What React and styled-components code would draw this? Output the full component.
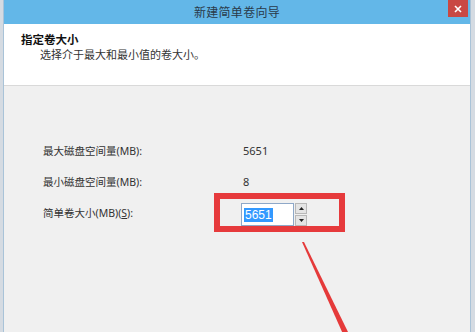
import React from 'react';
import styled, {createGlobalStyle} from 'styled-components';

const GlobalStyle = createGlobalStyle`
  html, body {
    margin: 0;
    padding: 0;
    width: 475px;
    height: 332px;
    overflow: hidden;
    background: #d5dbe2;
  }
  body {
    font-family: "Noto Sans", "Noto Sans CJK SC", sans-serif;
    color: #222;
  }
  * {
    box-sizing: border-box;
  }
`;

const rows = [
    {label: '最大磁盘空间量(MB):', value: '5651'},
    {label: '最小磁盘空间量(MB):', value: '8'},
];

const App = () => {
    return (
        <>
            <GlobalStyle/>
            <Desktop>
                <Window>
                    <TitleBar>
                        <span/>
                        <Title>新建简单卷向导</Title>
                        <CloseButton>
                            <svg width="8" height="8" viewBox="0 0 8 8">
                                <path d="M1 1 L7 7 M7 1 L1 7" stroke="#fff" strokeWidth="1.6"/>
                            </svg>
                        </CloseButton>
                    </TitleBar>

                    <Header>
                        <HeadTitle>指定卷大小</HeadTitle>
                        <HeadSub>选择介于最大和最小值的卷大小。</HeadSub>
                    </Header>

                    <Body>
                        <Fields>
                            {rows.map((row) => (
                                <React.Fragment key={row.label}>
                                    <Label>{row.label}</Label>
                                    <Value>{row.value}</Value>
                                </React.Fragment>
                            ))}
                            <Label $last>简单卷大小(MB)(<u>S</u>):</Label>
                            <SpinBox>
                                <Input>
                                    <Selected>5651</Selected>
                                </Input>
                                <Spinner>
                                    <SpinButton>
                                        <svg width="5" height="3" viewBox="0 0 5 3"><path d="M2.5 0 L5 3 L0 3 Z" fill="#222"/></svg>
                                    </SpinButton>
                                    <SpinButton>
                                        <svg width="5" height="3" viewBox="0 0 5 3"><path d="M0 0 L5 0 L2.5 3 Z" fill="#222"/></svg>
                                    </SpinButton>
                                </Spinner>
                                <Highlight/>
                            </SpinBox>
                        </Fields>
                    </Body>

                    <Arrow width="60" height="100" viewBox="0 0 60 100">
                        <polygon points="4,4 6,4 51,96 45,96" fill="#e53a3a"/>
                    </Arrow>
                </Window>
            </Desktop>
        </>
    )
}

//Style
const Desktop = styled.div`
  display: flex;
  height: 332px;
  padding-left: 3px;
  overflow: hidden;
`;

const Window = styled.div`
  position: relative;
  width: 468px;
  height: 360px;
  display: flex;
  flex-direction: column;
  background: #f0f0f0;
  border-left: 1px solid #a9c3d8;
  border-right: 1px solid #a9c3d8;
`;

const TitleBar = styled.div`
  height: 24px;
  display: grid;
  grid-template-columns: 1fr auto 1fr;
  align-items: center;
  background: #63b7e8;
`;

const Title = styled.div`
  font-size: 12px;
  color: #2a3a4a;
  letter-spacing: 0.3px;
`;

const CloseButton = styled.div`
  justify-self: end;
  align-self: start;
  width: 20px;
  height: 17px;
  margin-right: 2px;
  display: flex;
  align-items: center;
  justify-content: center;
  background: #c94843;
`;

const Header = styled.div`
  height: 62px;
  padding: 8px 0 0 17px;
  background: #fff;
  border-bottom: 1px solid #d9d9d9;
`;

const HeadTitle = styled.div`
  font-size: 11.5px;
  font-weight: bold;
  line-height: 15px;
  color: #111;
`;

const HeadSub = styled.div`
  margin-left: 19px;
  font-size: 11px;
  line-height: 15px;
  color: #333;
`;

const Body = styled.div`
  flex: 1;
  padding: 55px 0 0 39px;
`;

const Fields = styled.div`
  display: grid;
  grid-template-columns: 198px auto;
  grid-template-rows: 20px 20px 23px;
  row-gap: 11px;
  align-items: center;
  font-size: 10.5px;
  color: #333;
`;

const Label = styled.div`
  line-height: 20px;
  align-self: ${(p) => (p.$last ? 'start' : 'center')};

  u {
    text-decoration: underline;
  }
`;

const Value = styled.div`
  line-height: 20px;
  padding-left: 2px;
  font-size: 11px;
`;

const SpinBox = styled.div`
  position: relative;
  display: flex;
  width: 66px;
  height: 23px;
`;

const Input = styled.div`
  width: 53px;
  height: 23px;
  display: flex;
  align-items: center;
  padding-left: 2px;
  background: #fff;
  border: 1px solid #8ea8c8;
`;

const Selected = styled.span`
  background: #3399ff;
  color: #fff;
  font-family: "Liberation Sans", sans-serif;
  font-size: 12px;
  line-height: 14px;
  padding: 0 1px;
`;

const Spinner = styled.div`
  display: flex;
  flex-direction: column;
  gap: 1px;
  margin-left: 1px;
`;

const SpinButton = styled.div`
  width: 12px;
  height: 11px;
  display: flex;
  align-items: center;
  justify-content: center;
  background: #e4e4e4;
  border: 1px solid #b8b8b8;
`;

const Highlight = styled.div`
  position: absolute;
  left: -27px;
  top: -10px;
  width: 131px;
  height: 39px;
  border: 6px solid #e63a3c;
`;

const Arrow = styled.svg`
  position: absolute;
  left: 294px;
  top: 238px;
  pointer-events: none;
`;

export default App;
